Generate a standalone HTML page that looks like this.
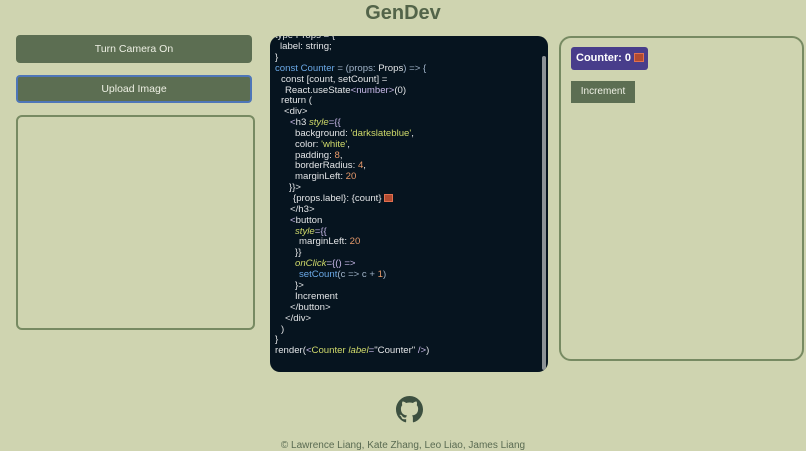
<!DOCTYPE html>
<html><head><meta charset="utf-8"><style>
body{margin:0;width:806px;height:445px;background:#cfd4b0;font-family:"Liberation Sans",sans-serif;position:relative;overflow:hidden}
.t{position:absolute;left:0;width:806px;top:2px;text-align:center;font-size:20px;font-weight:bold;color:#536449}
.btn{position:absolute;left:16px;width:236px;height:28px;background:#5c6e52;border-radius:4px;color:#eef0e4;font-size:10.5px;text-align:center;line-height:28px;box-sizing:border-box}
.box{position:absolute;border:2px solid #778a62;border-radius:6px;box-sizing:border-box}
.code{position:absolute;left:270px;top:36px;width:278px;height:336px;background:#06141f;border-radius:10px;overflow:hidden}
.code div{position:absolute;left:0;font-size:9.6px;color:#e2e4e6;white-space:pre;line-height:11px}
.k{color:#6aa8e6}.g{color:#a0b3c8}.s{color:#cfd96a}.n{color:#e6996a}.i{color:#cfd96a;font-style:italic}.tg{color:#c8b9e8}
.emo{display:inline-block;width:9px;height:8px;background:#b04a30;border:1px solid #e07050;vertical-align:-1px;box-sizing:border-box}
</style></head><body>
<div class="t">GenDev</div>
<div class="btn" style="top:35px">Turn Camera On</div>
<div class="btn" style="top:75px;border:2px solid #4e76b8;line-height:24px">Upload Image</div>
<div class="box" style="left:16px;top:115px;width:239px;height:215px"></div>
<div class="code">
<div style="top:-6px;left:5px">type Props = {</div>
<div style="top:5px;left:10px">label: string;</div>
<div style="top:16px;left:5px" class="g">}</div>
<div style="top:27px;left:5px"><span class="k">const Counter</span> <span class="g">= (props:</span> Props<span class="g">) =&gt; {</span></div>
<div style="top:38px;left:11px">const [count, setCount] =</div>
<div style="top:49px;left:15px">React.useState<span class="tg">&lt;number&gt;</span>(0)</div>
<div style="top:59px;left:11px">return (</div>
<div style="top:70px;left:14px" class="tg">&lt;div&gt;</div>
<div style="top:81px;left:20px"><span class="tg">&lt;</span>h3 <span class="i">style</span><span class="tg">={{</span></div>
<div style="top:92px;left:25px">background: <span class="s">'darkslateblue'</span>,</div>
<div style="top:103px;left:25px">color: <span class="s">'white'</span>,</div>
<div style="top:114px;left:25px">padding: <span class="n">8</span>,</div>
<div style="top:124px;left:25px">borderRadius: <span class="n">4</span>,</div>
<div style="top:135px;left:25px">marginLeft: <span class="n">20</span></div>
<div style="top:146px;left:19px" class="tg">}}&gt;</div>
<div style="top:157px;left:23px">{props.label}: {count} <span class="emo"></span></div>
<div style="top:168px;left:20px" class="tg">&lt;/h3&gt;</div>
<div style="top:179px;left:20px"><span class="tg">&lt;</span>button</div>
<div style="top:190px;left:25px"><span class="i">style</span><span class="tg">={{</span></div>
<div style="top:200px;left:29px">marginLeft: <span class="n">20</span></div>
<div style="top:211px;left:25px" class="tg">}}</div>
<div style="top:222px;left:25px"><span class="i">onClick</span><span class="tg">={() =&gt;</span></div>
<div style="top:233px;left:29px"><span class="k">setCount</span><span class="g">(c =&gt; c + </span><span class="n">1</span><span class="g">)</span></div>
<div style="top:244px;left:25px" class="tg">}&gt;</div>
<div style="top:255px;left:25px">Increment</div>
<div style="top:266px;left:20px" class="tg">&lt;/button&gt;</div>
<div style="top:277px;left:15px" class="tg">&lt;/div&gt;</div>
<div style="top:288px;left:11px">)</div>
<div style="top:298px;left:5px">}</div>
<div style="top:309px;left:5px">render(<span class="tg">&lt;</span><span class="s">Counter</span> <span class="i">label</span><span class="tg">=</span>"Counter" <span class="tg">/&gt;</span>)</div>
<div style="left:272px;top:20px;height:314px;width:4px;background:#8c9296;border-radius:2px"></div>
</div>
<div class="box" style="left:559px;top:36px;width:245px;height:325px;border-radius:12px"></div>
<div style="position:absolute;left:571px;top:47px;width:77px;height:23px;background:#483d8b;border-radius:3px;color:#fff;font-weight:bold;font-size:11px;line-height:23px;padding-left:5px;box-sizing:border-box">Counter: 0 <span class="emo" style="width:10px;height:9px"></span></div>
<div style="position:absolute;left:571px;top:81px;width:64px;height:22px;background:#5c6e52;color:#eef0e4;font-size:10px;text-align:center;line-height:22px">Increment</div>
<svg style="position:absolute;left:396px;top:396px" width="27" height="27" viewBox="0 0 16 16"><path fill="#3d5040" d="M8 0C3.580 0 0 3.58 0 8c0 3.54 2.29 6.53 5.47 7.59.4.07.55-.17.55-.38 0-.19-.01-.82-.01-1.490-2.01.37-2.53-.49-2.69-.94-.09-.23-.48-.94-.82-1.13-.28-.15-.68-.52-.01-.53.63-.01 1.08.58 1.23.82.72 1.21 1.87.87 2.330.66.07-.52.28-.87.51-1.07-1.78-.2-3.64-.89-3.64-3.95 0-.87.31-1.59.82-2.15-.08-.2-.36-1.02.08-2.12 0 0 .67-.21 2.2.82.64-.18 1.32-.27 2-.27.68 0 1.36.09 2 .27 1.53-1.04 2.2-.82 2.2-.82.44 1.1.16 1.92.08 2.12.51.56.82 1.27.82 2.15 0 3.07-1.87 3.75-3.65 3.95.29.25.54.73.54 1.48 0 1.07-.01 1.93-.01 2.2 0 .21.15.46.55.38A8.013 8.013 0 0016 8c0-4.42-3.58-8-8-8z"/></svg>
<div style="position:absolute;left:0;width:806px;top:440px;text-align:center;font-size:10px;color:#5a6b52">© Lawrence Liang, Kate Zhang, Leo Liao, James Liang</div>
</body></html>
